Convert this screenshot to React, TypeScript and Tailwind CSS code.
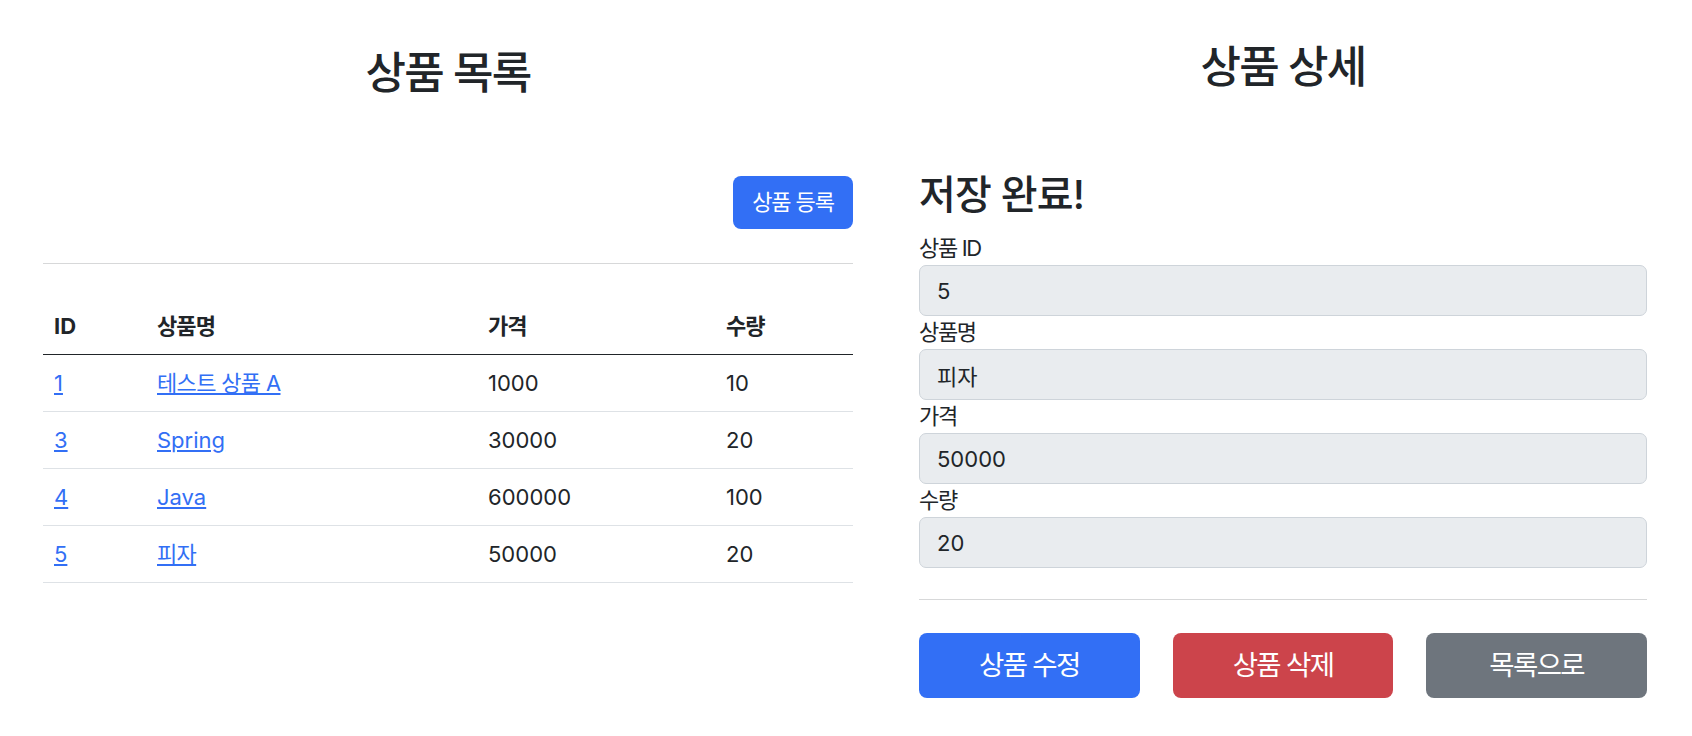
export default function App() {
  const rows = [
    { id: 1, name: '테스트 상품 A', price: 1000, qty: 10, ko: true },
    { id: 3, name: 'Spring', price: 30000, qty: 20, ko: false },
    { id: 4, name: 'Java', price: 600000, qty: 100, ko: false },
    { id: 5, name: '피자', price: 50000, qty: 20, ko: true },
  ];
  const fields = [
    { label: '상품 ID', value: '5' },
    { label: '상품명', value: '피자' },
    { label: '가격', value: '50000' },
    { label: '수량', value: '20' },
  ];
  return (
    <div className="w-[1692px] h-[736px] bg-white flex text-[#212529] font-['Inter','Noto_Sans_CJK_KR',sans-serif]">
      {/* Left: 상품 목록 */}
      <div className="ml-[43px] w-[810px] flex flex-col">
        <h2 className="mt-[47px] h-[53px] leading-[53px] text-[44px] font-medium text-center tracking-[-0.04em]">
          상품 목록
        </h2>
        <div className="mt-[76px] flex justify-end">
          <button className="w-[120px] h-[53px] rounded-[8px] bg-[#326ff5] text-white text-[22px] leading-[33px] tracking-[-0.05em]">
            상품 등록
          </button>
        </div>
        <div className="mt-[34px] border-t border-[#d7d8d9]" />
        <div className="mt-[34px] text-[22px]">
          <div className="grid grid-cols-[103px_331px_238px_138px] h-[57px] items-center border-b border-[#212529] font-bold">
            <div className="px-[11px]">ID</div>
            <div className="px-[11px] tracking-[-0.04em]">상품명</div>
            <div className="px-[11px] tracking-[-0.04em]">가격</div>
            <div className="px-[11px] tracking-[-0.04em]">수량</div>
          </div>
          {rows.map((r) => (
            <div
              key={r.id}
              className="grid grid-cols-[103px_331px_238px_138px] h-[57px] items-center border-b border-[#dee2e6]"
            >
              <div className="px-[11px]">
                <a href="#" className="text-[#326ff5] underline">{r.id}</a>
              </div>
              <div className="px-[11px]">
                <a href="#" className={`text-[#326ff5] underline ${r.ko ? 'tracking-[-0.03em]' : ''}`}>
                  {r.name}
                </a>
              </div>
              <div className="px-[11px]">{r.price}</div>
              <div className="px-[11px]">{r.qty}</div>
            </div>
          ))}
        </div>
      </div>

      {/* Right: 상품 상세 */}
      <div className="ml-[66px] w-[728px] flex flex-col">
        <h2 className="mt-[41px] h-[53px] leading-[53px] text-[44px] font-medium text-center tracking-[-0.04em]">
          상품 상세
        </h2>
        <h4 className="mt-[77px] h-[48px] leading-[48px] text-[40px] font-medium tracking-[-0.02em]">
          저장 완료!
        </h4>
        <div className="mt-[13px] flex flex-col">
          {fields.map((f) => (
            <div key={f.label} className="flex flex-col">
              <label className="h-[33px] leading-[33px] text-[22px] tracking-[-0.06em]">{f.label}</label>
              <input
                readOnly
                value={f.value}
                className="h-[51px] w-full bg-[#e9ecef] border border-[#ced4da] rounded-[7px] px-[17px] text-[22px] text-[#212529] outline-none"
              />
            </div>
          ))}
        </div>
        <div className="mt-[31px] border-t border-[#d7d8d9]" />
        <div className="mt-[33px] grid grid-cols-3 gap-[33px]">
          <button className="h-[65px] rounded-[8px] bg-[#326ff5] text-white text-[27.5px] tracking-[-0.06em]">
            상품 수정
          </button>
          <button className="h-[65px] rounded-[8px] bg-[#cc444b] text-white text-[27.5px] tracking-[-0.06em]">
            상품 삭제
          </button>
          <button className="h-[65px] rounded-[8px] bg-[#6e757d] text-white text-[27.5px] tracking-[-0.06em]">
            목록으로
          </button>
        </div>
      </div>
    </div>
  );
}
